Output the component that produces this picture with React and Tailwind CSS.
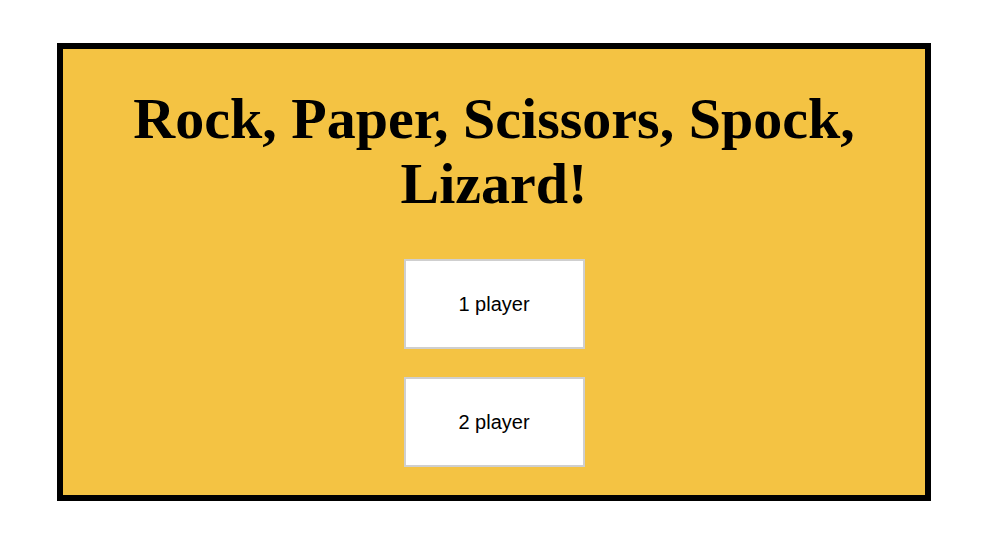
export default function App() {
  return (
    <div className="min-h-screen bg-white pt-[43px]">
      <div className="ml-[57px] flex h-[458px] w-[874px] flex-col items-center border-[6px] border-black bg-[#F4C343] pt-[37px]">
        <h1 className="px-14 text-center font-['Liberation_Serif',serif] text-[58px] font-bold leading-[65px] text-black">
          Rock, Paper, Scissors, Spock, Lizard!
        </h1>
        <div className="mt-[43px] flex flex-col items-center gap-[28px]">
          <button
            type="button"
            className="h-[90px] w-[181px] border-2 border-[#cfcfcf] bg-white font-['Liberation_Sans',sans-serif] text-[20px] text-black"
          >
            1 player
          </button>
          <button
            type="button"
            className="h-[90px] w-[181px] border-2 border-[#cfcfcf] bg-white font-['Liberation_Sans',sans-serif] text-[20px] text-black"
          >
            2 player
          </button>
        </div>
      </div>
    </div>
  );
}
